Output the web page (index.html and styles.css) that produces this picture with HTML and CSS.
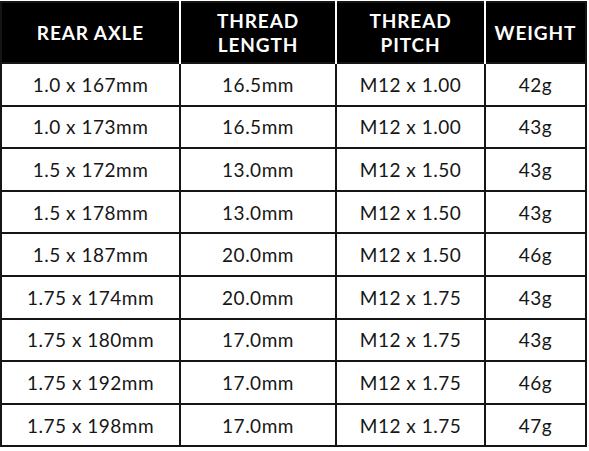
FILE: index.html
```html
<!DOCTYPE html>
<html>
<head>
<meta charset="utf-8">
<link rel="stylesheet" href="styles.css">
</head>
<body>
<table class="spec">
  <colgroup>
    <col class="c1"><col class="c2"><col class="c3"><col class="c4">
  </colgroup>
  <thead>
    <tr><th>REAR AXLE</th><th>THREAD<br>LENGTH</th><th>THREAD<br>PITCH</th><th>WEIGHT</th></tr>
  </thead>
  <tbody>
    <tr><td>1.0 x 167mm</td><td>16.5mm</td><td>M12 x 1.00</td><td>42g</td></tr>
    <tr><td>1.0 x 173mm</td><td>16.5mm</td><td>M12 x 1.00</td><td>43g</td></tr>
    <tr><td>1.5 x 172mm</td><td>13.0mm</td><td>M12 x 1.50</td><td>43g</td></tr>
    <tr><td>1.5 x 178mm</td><td>13.0mm</td><td>M12 x 1.50</td><td>43g</td></tr>
    <tr><td>1.5 x 187mm</td><td>20.0mm</td><td>M12 x 1.50</td><td>46g</td></tr>
    <tr><td>1.75 x 174mm</td><td>20.0mm</td><td>M12 x 1.75</td><td>43g</td></tr>
    <tr><td>1.75 x 180mm</td><td>17.0mm</td><td>M12 x 1.75</td><td>43g</td></tr>
    <tr><td>1.75 x 192mm</td><td>17.0mm</td><td>M12 x 1.75</td><td>46g</td></tr>
    <tr><td>1.75 x 198mm</td><td>17.0mm</td><td>M12 x 1.75</td><td>47g</td></tr>
  </tbody>
</table>
</body>
</html>
```

FILE: styles.css
```css
html, body {
  margin: 0;
  padding: 0;
  background: #ffffff;
}
body {
  padding-top: 1px;
  font-family: "Lato", "Liberation Sans", sans-serif;
}
.spec {
  border-collapse: collapse;
  width: 585px;
  table-layout: fixed;
  border: 2px solid #151515;
}
.c1 { width: 179px; }
.c2 { width: 156px; }
.c3 { width: 149px; }
.c4 { width: 101px; }
.spec th {
  background: #000000;
  color: #ffffff;
  font-weight: 700;
  font-size: 19px;
  line-height: 24px;
  letter-spacing: 0.9px;
  height: 59px;
  padding: 0;
  border-left: 2px solid #ffffff;
  text-align: center;
  vertical-align: middle;
}
.spec th:first-child {
  border-left: none;
}
.spec td {
  height: 40.6px;
  padding: 0;
  border: 2px solid #151515;
  text-align: center;
  vertical-align: middle;
  font-size: 19px;
  color: #161616;
  letter-spacing: 0.5px;
}
```
